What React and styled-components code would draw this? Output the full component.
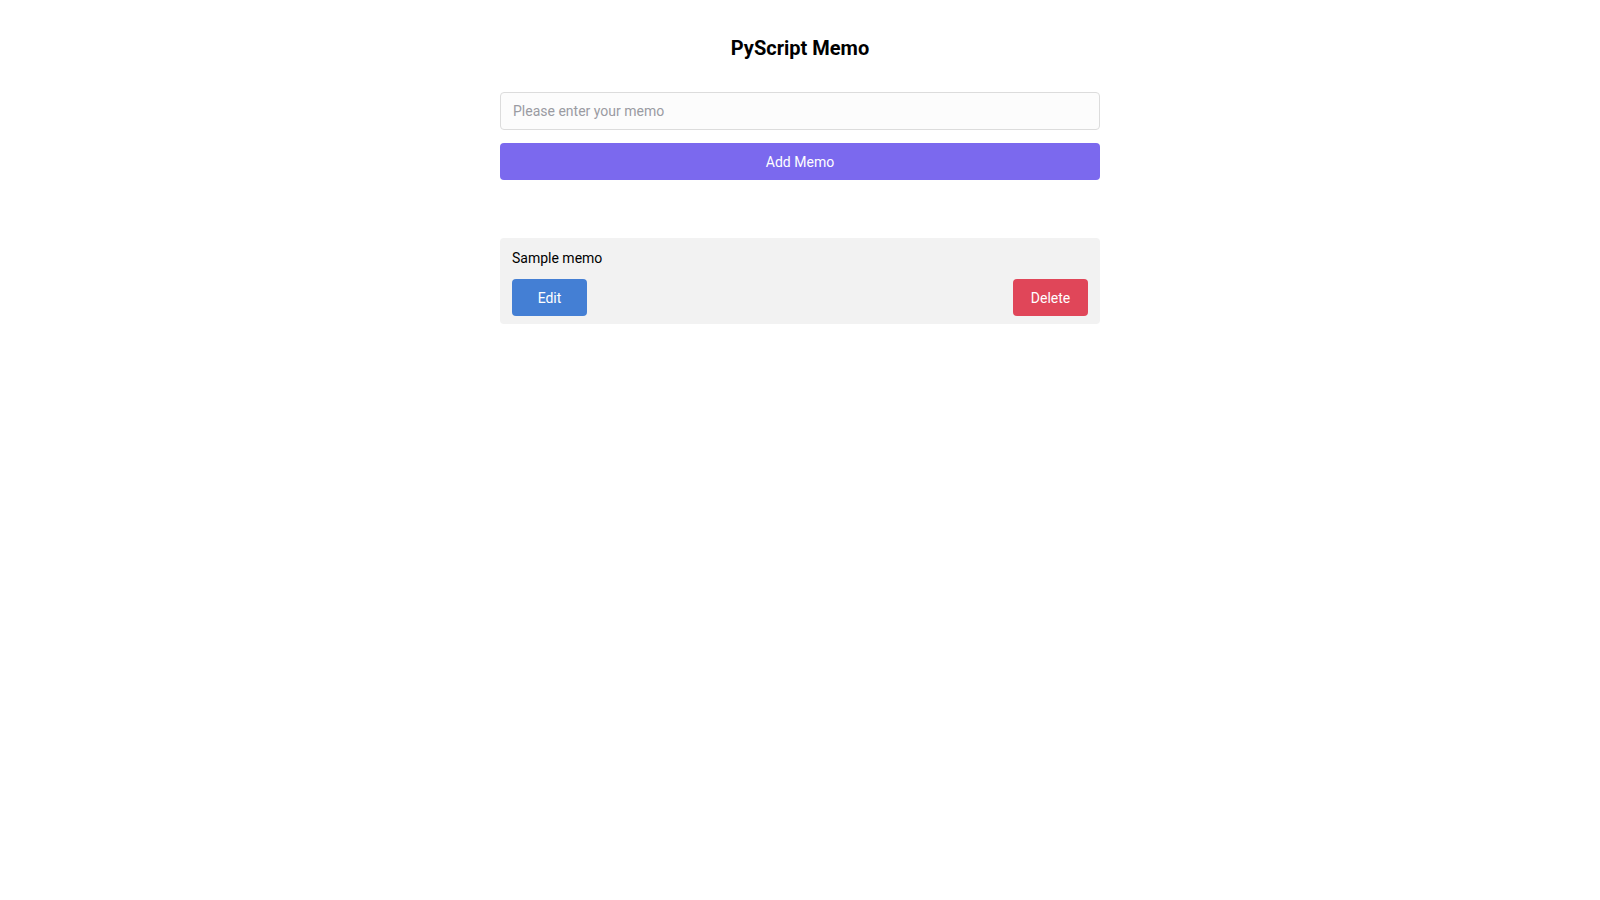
import React, { useState } from "react";
import styled, { createGlobalStyle } from "styled-components";

const GlobalStyle = createGlobalStyle`
  body {
    margin: 0;
    background: #fff;
    font-family: "Roboto", "Inter", sans-serif;
    color: #000;
  }
  * {
    box-sizing: border-box;
  }
`;

const Page = styled.main`
  width: 600px;
  margin: 0 auto;
  padding-top: 36px;
`;

const Title = styled.h1`
  margin: 0 0 32px;
  font-size: 20px;
  line-height: 24px;
  font-weight: 700;
  text-align: center;
`;

const MemoInput = styled.input`
  display: block;
  width: 100%;
  height: 38px;
  padding: 0 12px;
  border: 1px solid #dcdcdc;
  border-radius: 4px;
  background: #fcfcfc;
  font-family: inherit;
  font-size: 14px;
  color: #222;
  outline: none;
  &::placeholder {
    color: #9a9ba2;
  }
`;

const AddButton = styled.button`
  display: block;
  width: 100%;
  height: 37px;
  margin-top: 13px;
  border: none;
  border-radius: 4px;
  background: #7b69ee;
  color: #fff;
  font-family: inherit;
  font-size: 14px;
  cursor: pointer;
`;

const MemoList = styled.ul`
  list-style: none;
  margin: 58px 0 0;
  padding: 0;
`;

const MemoCard = styled.li`
  background: #f2f2f2;
  border-radius: 4px;
  padding: 10px 12px 8px;
`;

const MemoText = styled.p`
  margin: 0;
  font-size: 14px;
  line-height: 20px;
`;

const Actions = styled.div`
  display: flex;
  justify-content: space-between;
  margin-top: 11px;
`;

const ActionButton = styled.button`
  width: 75px;
  height: 37px;
  border: none;
  border-radius: 4px;
  background: ${(p) => (p.$danger ? "#e04659" : "#447fd4")};
  color: #fff;
  font-family: inherit;
  font-size: 14px;
  cursor: pointer;
`;

const App = () => {
  const [text, setText] = useState("");
  const [memos, setMemos] = useState(["Sample memo"]);

  const addMemo = () => {
    if (!text.trim()) return;
    setMemos([...memos, text.trim()]);
    setText("");
  };

  return (
    <>
      <GlobalStyle />
      <Page>
        <Title>PyScript Memo</Title>
        <MemoInput
          placeholder="Please enter your memo"
          value={text}
          onChange={(e) => setText(e.target.value)}
        />
        <AddButton onClick={addMemo}>Add Memo</AddButton>
        <MemoList>
          {memos.map((m, i) => (
            <MemoCard key={i}>
              <MemoText>{m}</MemoText>
              <Actions>
                <ActionButton>Edit</ActionButton>
                <ActionButton
                  $danger
                  onClick={() => setMemos(memos.filter((_, j) => j !== i))}
                >
                  Delete
                </ActionButton>
              </Actions>
            </MemoCard>
          ))}
        </MemoList>
      </Page>
    </>
  );
};

export default App;
